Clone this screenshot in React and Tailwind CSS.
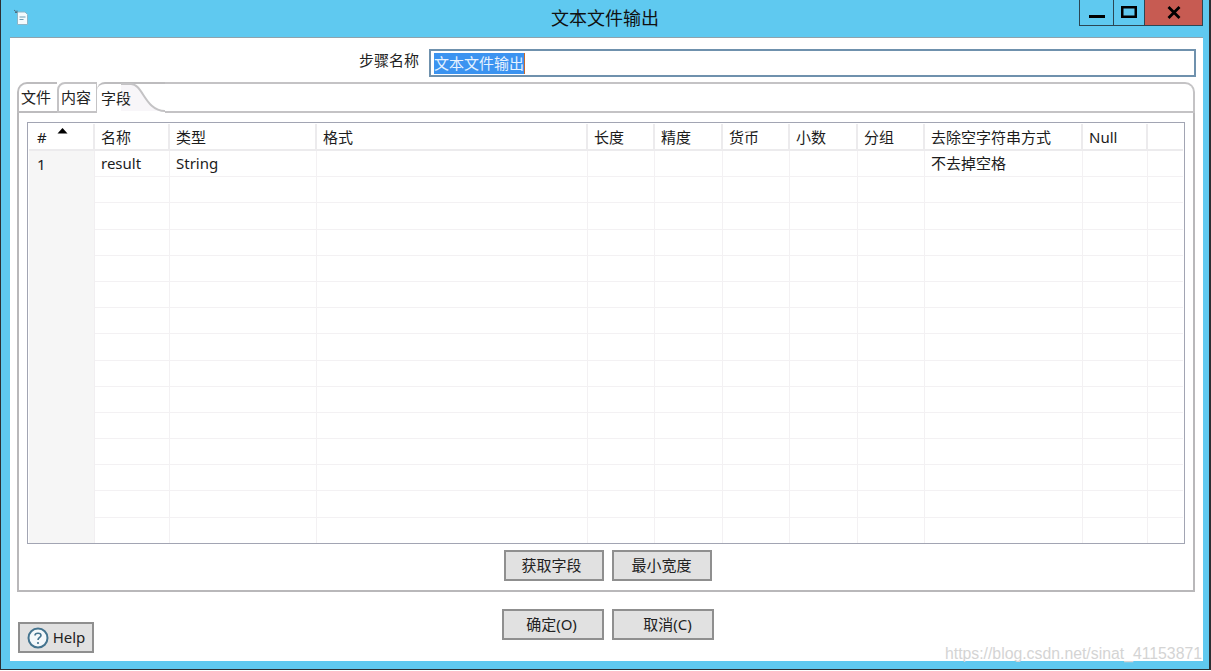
import React from 'react';

const cjk = { fontFamily: '"Noto Sans", "Noto Sans CJK SC", sans-serif' };

const headers = ['#', '名称', '类型', '格式', '长度', '精度', '货币', '小数', '分组', '去除空字符串方式', 'Null', ''];
const firstRow = ['1', 'result', 'String', '', '', '', '', '', '', '不去掉空格', '', ''];
const gridCols = 'grid grid-cols-[66px_75px_147px_271px_67px_68px_67px_68px_67px_158px_65px_1fr]';

const Btn = ({ children, className = '' }) => (
  <button className={`h-[31px] bg-[#e1e1e1] border-2 border-[#8f8f8f] text-[15px] text-[#222] flex items-center justify-center ${className}`}>
    {children}
  </button>
);

const Row = ({ cells, header }) => (
  <div className={`${gridCols} ${header ? 'h-[27px]' : 'h-[26.2px]'} shrink-0`}>
    {cells.map((c, i) => (
      <div
        key={i}
        className={`relative flex items-center text-[15px] text-[#1c1c1c] ${i === 11 ? '' : header ? 'border-r-2 border-[#ecebed]' : 'border-r border-[#f1eff1]'} ${header ? 'border-b-2 border-[#ecebed] bg-white pt-[2px]' : i === 0 ? 'bg-[#f6f6f6]' : 'border-b border-[#f3f1f3]'} ${i === 0 ? 'pl-[8px]' : 'pl-[6px]'}`}
      >
        {c}
        {header && i === 0 && (
          <svg className="absolute left-[28px] top-[4px]" width="11" height="6" viewBox="0 0 11 6">
            <path d="M5.5 0 L10.5 5.5 L0.5 5.5 Z" fill="#000" />
          </svg>
        )}
      </div>
    ))}
  </div>
);

export default function App() {
  return (
    <div className="w-[1211px] h-[671px] bg-white overflow-hidden" style={cjk}>
      <div className="relative h-[670px] bg-[#5fc9f0] border-l border-r-2 border-b border-[#2b2f33] flex flex-col">
        {/* Title bar */}
        <div className="h-[37px] shrink-0 flex">
          <div className="flex-1">
            <svg className="ml-[12px] mt-[9px]" width="16" height="17" viewBox="0 0 16 17">
              <path d="M4.5 3 H12 L14.5 5.5 V15.5 H4.5 Z" fill="#f4fafd" stroke="#8db4c6" strokeWidth="1" />
              <path d="M6.5 8 H12.5 M6.5 10.5 H10.5" stroke="#6f9db3" strokeWidth="1" />
              <path d="M1 1 L4 3.5 M4 1.5 V3.5 H2" stroke="#4d6f80" strokeWidth="1" fill="none" />
            </svg>
          </div>
          <div className="pt-[5px] text-[18px] leading-[26px] text-[#111]">文本文件输出</div>
          <div className="flex-1 flex justify-end">
            <div className="mr-[6px] h-[26px] flex border border-t-0 border-[#2b4654]">
              <div className="w-[34px] border-r border-[#2b4654] flex justify-center">
                <svg className="mt-[15px]" width="16" height="3" viewBox="0 0 16 3"><rect width="16" height="3" fill="#000" /></svg>
              </div>
              <div className="w-[31px] border-r border-[#2b4654] flex justify-center">
                <svg className="mt-[6px]" width="16" height="12" viewBox="0 0 16 12"><rect x="1.25" y="1.25" width="13.5" height="9.5" fill="none" stroke="#000" strokeWidth="2.5" /></svg>
              </div>
              <div className="w-[57px] bg-[#c75b52] flex justify-center">
                <svg className="mt-[6px]" width="14" height="13" viewBox="0 0 14 13"><path d="M1.5 1 L12.5 12 M12.5 1 L1.5 12" stroke="#000" strokeWidth="2.8" /></svg>
              </div>
            </div>
          </div>
        </div>

        {/* Dialog body */}
        <div className="h-[624px] ml-[9px] mr-[6px] bg-white border-t border-[#8fa3ad] flex flex-col">
          {/* Step name */}
          <div className="h-[44px] shrink-0 flex items-start pt-[11px]">
            <div className="w-[409px] text-right text-[15px] leading-[22px] text-[#222]">步骤名称</div>
            <div className="ml-[10px] w-[767px] h-[28px] border-2 border-[#6f91ad] flex items-center pl-[3px] text-[15px]">
              <span className="bg-[#3b93f0] text-[#e6f2ff] leading-[21px] border-r border-[#c8692c]">文本文件输出</span>
            </div>
          </div>

          {/* Tab panel */}
          <div className="ml-[7px] w-[1178px] h-[510px] shrink-0 flex flex-col">
            <div className="h-[31px] shrink-0 flex text-[15px] text-[#222]">
              <div className="w-[40px] border-2 border-r-0 border-[#bdbcbe] rounded-tl-[10px] flex items-center pl-[2px]">文件</div>
              <div className="w-[40px] border-2 border-r border-[#c4c3c5] rounded-tl-[8px] flex items-center pl-[2px]">内容</div>
              <div className="relative w-[68px] border-t-2 border-[#bdbcbe] rounded-tl-[8px] flex items-center pl-[4px]">
                <svg className="absolute right-0 -top-[2px]" width="44" height="31" viewBox="0 0 44 31">
                  <path d="M0 2 H10 C22 2 24 29 44 29 L0 29 Z" fill="#f8f6f9" />
                  <path d="M0 2 H10 C22 2 24 29 44 29" fill="none" stroke="#c4c3c5" strokeWidth="2" />
                </svg>
                <span className="relative">字段</span>
              </div>
              <div className="flex-1 border-t-2 border-r-2 border-b-2 border-[#c4c3c5] rounded-tr-[10px]" />
            </div>
            <div className="flex-1 border-l-2 border-r-2 border-b-2 border-[#b9b8ba] pl-[8px] pr-[8px] pt-[9px] flex flex-col">
              <div className="h-[422px] shrink-0 border border-[#a2a5b3] p-px overflow-hidden flex flex-col">
                <Row cells={headers} header />
                <Row cells={firstRow} />
                {Array.from({ length: 14 }).map((_, i) => (
                  <Row key={i} cells={Array(12).fill('')} />
                ))}
              </div>
              <div className="flex justify-center gap-[8px] pt-[6px] pl-[4px]">
                <Btn className="w-[100px] pr-[5px]">获取字段</Btn>
                <Btn className="w-[100px] pr-[1px]">最小宽度</Btn>
              </div>
            </div>
          </div>

          {/* Footer */}
          <div className="flex pl-[8px]">
            <Btn className="w-[76px] mt-[30px] gap-[4px]">
              <svg width="22" height="22" viewBox="0 0 22 22">
                <circle cx="11" cy="11" r="9.5" fill="#f4f8fb" stroke="#44748f" strokeWidth="2" />
                <path d="M8 8.5 C8 5.5 14 5.5 14 8.5 C14 10.5 11 10.5 11 13" fill="none" stroke="#44748f" strokeWidth="1.6" />
                <circle cx="11" cy="16" r="1.1" fill="#44748f" />
              </svg>
              Help
            </Btn>
            <div className="ml-[408px] flex gap-[8px] mt-[17px]">
              <Btn className="w-[102px] pr-[3px]">确定(O)</Btn>
              <Btn className="w-[102px] pl-[9px]">取消(C)</Btn>
            </div>
          </div>
        </div>

        {/* Watermark */}
        <div className="absolute right-[7px] top-[644px] text-[15.8px] leading-[20px] text-[#d4d4d4]" style={{ fontFamily: '"Liberation Sans", sans-serif' }}>
          https://blog.csdn.net/sinat_41153871
        </div>
      </div>
    </div>
  );
}
